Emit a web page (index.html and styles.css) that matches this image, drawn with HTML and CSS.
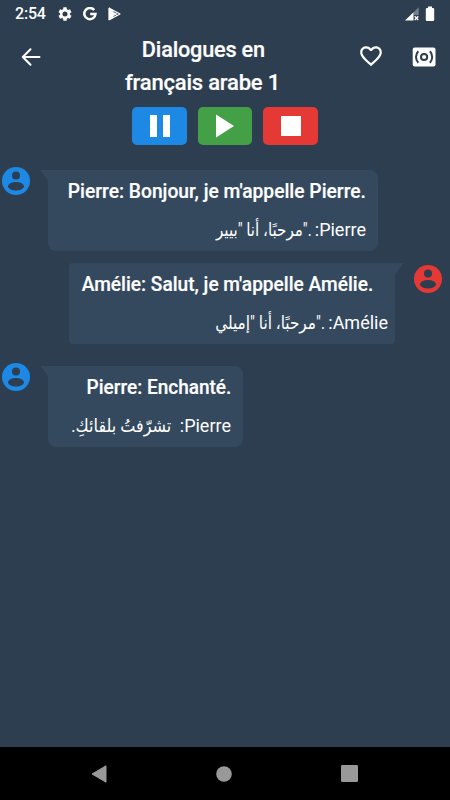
FILE: index.html
```html
<!DOCTYPE html>
<html lang="fr">
<head>
<meta charset="utf-8">
<title>Dialogues en français arabe 1</title>
<link rel="stylesheet" href="styles.css">
</head>
<body>
<div class="screen">
  <div class="status">
    <span class="clock">2:54</span>
    <svg class="gear" width="16" height="16" viewBox="0 0 24 24"><path fill="#fff" fill-rule="evenodd" d="M19.4 13a7.700 7.700 0 0 0 0-2l2.400-1.800-2.500-4.300-2.800 1.100a8 8 0 0 0-1.700-1L14.400 2H9.600l-.4 3a8 8 0 0 0-1.700 1L4.700 4.900 2.200 9.200 4.600 11a7.700 7.700 0 0 0 0 2l-2.400 1.800 2.500 4.300L7.500 18a8 8 0 0 0 1.700 1l.4 3h4.800l.4-3a8 8 0 0 0 1.700-1l2.800 1.100 2.500-4.300zM12 15.800a3.800 3.800 0 1 1 0-7.600 3.800 3.800 0 0 1 0 7.600z"/></svg>
    <svg class="google" width="14" height="14" viewBox="0 0 14 14"><path fill="none" stroke="#fff" stroke-width="2.500" d="M11.200 3A5.600 5.600 0 1 0 12.500 7H7.200"/></svg>
    <svg class="store" width="13" height="14" viewBox="0 0 13 14"><path fill="#fff" d="M.4.8 6.700 7 .4 13.200z"/><path fill="none" stroke="#fff" stroke-width="1.100" stroke-linejoin="round" d="M1 1l11 6-11 6M1 1l8 7.600M1 13l8-7.600"/></svg>
    <span class="grow"></span>
    <svg class="signal" width="14" height="14" viewBox="0 0 14 14"><path fill="#75808c" d="M8.500 5.500 13.700.3V8H8.500z"/><path fill="#fff" d="M0 13.600 8.500 5.300v8.300z"/><path stroke="#fff" stroke-width="1.300" d="m9.700 9.200 3.600 3.800m0-3.800-3.600 3.800"/></svg>
    <svg class="battery" width="10" height="16" viewBox="0 0 10 16"><path fill="#fff" d="M3 .5h4V2h1q1.200 0 1.200 1.200v10.600Q9.200 15 8 15H2Q.8 15 .8 13.800V3.200Q.8 2 2 2h1z"/></svg>
  </div>

  <div class="header">
    <svg class="back" width="20" height="20" viewBox="0 0 20 20"><path fill="none" stroke="#fff" stroke-width="2" stroke-linejoin="round" stroke-linecap="round" d="M18.500 10H2m7.500-7.800L1.800 10l7.700 7.800"/></svg>
    <h1><span class="title-a">Dialogues en</span><span class="title-b">français arabe 1</span></h1>
    <svg class="heart" width="26" height="26" viewBox="0 0 24 24"><path fill="#fff" d="M16.500 3c-1.740 0-3.410.81-4.500 2.090C10.910 3.810 9.240 3 7.500 3 4.420 3 2 5.420 2 8.500c0 3.780 3.400 6.860 8.550 11.540L12 21.350l1.450-1.320C18.600 15.360 22 12.280 22 8.500 22 5.420 19.580 3 16.500 3zm-4.400 15.550-.1.100-.1-.1C7.140 14.240 4 11.390 4 8.500 4 6.500 5.500 5 7.500 5c1.540 0 3.040.99 3.570 2.360h1.870C13.460 5.990 14.960 5 16.500 5c2 0 3.500 1.500 3.500 3.500 0 2.890-3.140 5.740-7.900 10.050z"/></svg>
    <svg class="sound" width="24" height="20" viewBox="0 0 24 20"><rect x=".7" y=".6" width="22.800" height="18.800" rx="2" fill="#fff"/><g fill="none" stroke="#2d3e50" stroke-width="2"><circle cx="12.100" cy="10" r="3.100"/><path d="M6.300 4.300a8.200 8.200 0 0 0 0 11.400M17.900 4.300a8.200 8.200 0 0 1 0 11.400"/></g></svg>
  </div>

  <div class="controls">
    <div class="btn blue"><svg width="20" height="24" viewBox="0 0 20 24"><path fill="#fff" d="M0 1h7v22H0zM13 1h7v22h-7z"/></svg></div>
    <div class="btn green"><svg width="18" height="24" viewBox="0 0 18 24"><path fill="#fff" d="M0 .5 18 12 0 23.500z"/></svg></div>
    <div class="btn red"><svg width="20" height="20" viewBox="0 0 20 20"><path fill="#fff" d="M0 0h20v20H0z"/></svg></div>
  </div>

  <div class="row first">
    <svg class="avatar" width="28" height="28" viewBox="0 0 28 28"><circle cx="14" cy="14" r="14" fill="#1e88e5"/><circle cx="14" cy="8.500" r="4" fill="#2d3e50"/><ellipse cx="14" cy="19.300" rx="8" ry="4.300" fill="#2d3e50"/></svg>
    <div class="bubble left b1">
      <p class="fr" dir="ltr"><span class="f1">Pierre: Bonjour, je m'appelle Pierre.</span></p>
      <p class="ar" dir="rtl"><span>Pierre: </span><span class="a1">."مرحبًا، أنا "بيير</span></p>
    </div>
  </div>
  <div class="row second">
    <div class="bubble right b2">
      <p class="fr" dir="ltr"><span class="f2">Amélie: Salut, je m'appelle Amélie.</span></p>
      <p class="ar" dir="rtl"><span>Amélie: </span><span class="a2">."مرحبًا، أنا "إميلي</span></p>
    </div>
    <svg class="avatar" width="28" height="28" viewBox="0 0 28 28"><circle cx="14" cy="14" r="14" fill="#e53935"/><circle cx="14" cy="8.500" r="4" fill="#2d3e50"/><ellipse cx="14" cy="19.300" rx="8" ry="4.300" fill="#2d3e50"/></svg>
  </div>
  <div class="row third">
    <svg class="avatar" width="28" height="28" viewBox="0 0 28 28"><circle cx="14" cy="14" r="14" fill="#1e88e5"/><circle cx="14" cy="8.500" r="4" fill="#2d3e50"/><ellipse cx="14" cy="19.300" rx="8" ry="4.300" fill="#2d3e50"/></svg>
    <div class="bubble left b3">
      <p class="fr" dir="ltr"><span class="f3">Pierre: Enchanté.</span></p>
      <p class="ar" dir="rtl"><span>Pierre:  </span><span class="a3">تشرّفتُ بلقائكِ.</span></p>
    </div>
  </div>

  <div class="nav">
    <svg width="16" height="18" viewBox="0 0 16 18"><path fill="#999" stroke="#999" stroke-linejoin="round" d="M15 .8v16.400L1 9z"/></svg>
    <svg width="16" height="16" viewBox="0 0 16 16"><circle cx="8" cy="8" r="7.800" fill="#999"/></svg>
    <svg width="17" height="17" viewBox="0 0 17 17"><rect width="17" height="17" rx="1.200" fill="#999"/></svg>
  </div>
</div>
</body>
</html>
```
FILE: styles.css
```css
* { box-sizing: border-box; }
body { margin: 0; }
h1, p { margin: 0; }
svg { display: block; flex: none; }

.screen {
  width: 450px;
  height: 800px;
  display: flex;
  flex-direction: column;
  background: #2d3e50;
  color: #fff;
  font-family: Roboto, "DejaVu Sans", sans-serif;
  overflow: hidden;
}

.status {
  height: 27px;
  display: flex;
  align-items: center;
  padding: 0 15px;
}
.clock { width: 31px; font-size: 16px; font-weight: 500; letter-spacing: -0.2px; white-space: nowrap; }
.gear { margin-left: 11px; }
.google { margin-left: 10px; }
.store { margin-left: 11px; }
.grow { flex: 1; }
.battery { margin-left: 6px; }

.header { height: 80px; display: flex; align-items: flex-start; padding-left: 21px; }
.back { margin-top: 20px; }
h1 {
  width: 155px;
  margin-left: 84px;
  padding-top: 6px;
  display: flex;
  flex-direction: column;
  align-items: center;
  font-size: 22px;
  font-weight: 500;
  line-height: 33px;
  white-space: nowrap;
  -webkit-text-stroke: 0.2px #fff;
}
.title-a, .title-b { letter-spacing: -0.2px; }
.title-a { transform: scaleX(0.985); transform-origin: right; }
.heart { margin: 16px 0 0 78px; }
.sound { margin: 20px 0 0 27.500px; }

.controls { display: flex; justify-content: center; gap: 11px; height: 38px; }
.btn { width: 54.500px; height: 38px; border-radius: 5px; display: flex; align-items: center; justify-content: center; }
.blue { background: #1e88e5; }
.green { background: #43a047; }
.red { background: #e53935; }

.row { display: flex; align-items: flex-start; }
.first { margin-top: 25px; padding-left: 2px; }
.second { margin-top: 11.500px; padding-left: 69px; }
.third { margin-top: 22px; padding-left: 2px; }
.avatar { margin-top: -3px; }
.second .avatar { margin: 2px 0 0 19px; }

.bubble { position: relative; height: 81px; border-radius: 8px; background: #34495e; padding-top: 7px; }
.left { margin-left: 18px; border-top-left-radius: 0; }
.right { border-radius: 4px; border-top-right-radius: 0; }
.left::before, .right::before { content: ""; position: absolute; top: 0; width: 9px; height: 12px; background: #34495e; }
.left::before { left: -8px; clip-path: polygon(0 0, 100% 0, 100% 100%); }
.right::before { right: -9px; clip-path: polygon(0 0, 100% 0, 0 100%); }
.b1 { width: 330px; padding-right: 12px; }
.b2 { width: 326px; padding-right: 7px; }
.b3 { width: 195px; padding-right: 12px; }

.fr { display: flex; justify-content: flex-end; font-size: 20px; font-weight: 500; line-height: 28px; white-space: nowrap; -webkit-text-stroke: 0.2px #fff; }
.fr span { transform-origin: right; }
.f1 { transform: scaleX(0.962); }
.f2 { transform: scaleX(0.955); }
.f3 { transform: scaleX(0.95); }
.b2 .fr { padding-right: 15px; }

.ar { display: flex; margin-top: 10px; font-size: 18px; line-height: 30px; height: 30px; white-space: pre; }
.ar span { transform-origin: right; }
.a1 { transform: scaleX(0.84); }
.a2 { transform: scaleX(0.85); }
.a3 { transform: scaleX(0.89); }

.nav {
  height: 53px;
  margin-top: auto;
  padding: 0 92px 0 91px;
  display: flex;
  align-items: center;
  justify-content: space-between;
  background: #000;
}
```
